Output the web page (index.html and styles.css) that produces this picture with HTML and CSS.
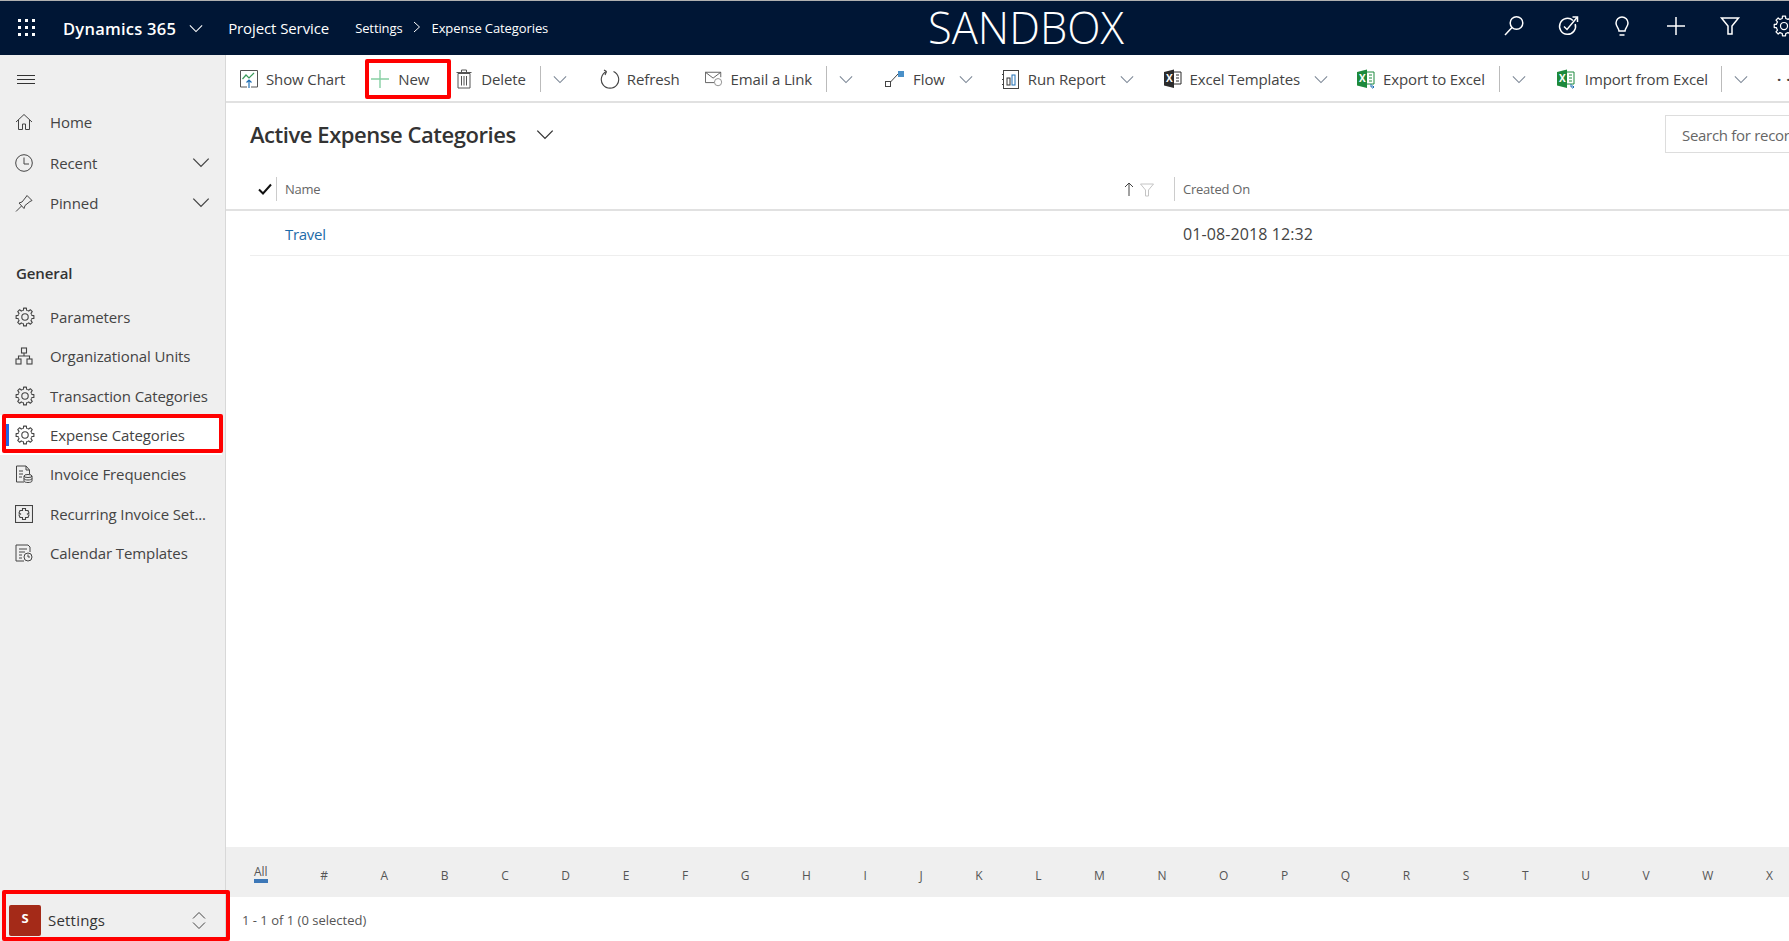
FILE: index.html
```html
<!DOCTYPE html>
<html lang="en">
  <head>
    <meta charset="UTF-8" />
    <title>Active Expense Categories</title>
    <link rel="stylesheet" href="styles.css">
  </head>
  <body>
    <svg class="defs" width="0" height="0">
      <defs>
        <symbol id="chev" viewBox="0 0 16 10"><path d="M1 1.500 8 8.500 15 1.500" fill="none" stroke="currentColor" stroke-width="1.200"/></symbol>
        <path id="tooth" d="M7.320 3.530 8.430 3.180 8.590 1.110H11.410L11.570 3.180 12.680 3.530" fill="none" stroke="currentColor" stroke-width="1.100" stroke-linejoin="round"/>
        <symbol id="gear" viewBox="0 0 20 20">
          <use href="#tooth"/>
          <use href="#tooth" transform="rotate(45 10 10)"/>
          <use href="#tooth" transform="rotate(90 10 10)"/>
          <use href="#tooth" transform="rotate(135 10 10)"/>
          <use href="#tooth" transform="rotate(180 10 10)"/>
          <use href="#tooth" transform="rotate(225 10 10)"/>
          <use href="#tooth" transform="rotate(270 10 10)"/>
          <use href="#tooth" transform="rotate(315 10 10)"/>
          <circle cx="10" cy="10" r="3.200" fill="none" stroke="currentColor" stroke-width="1.100"/>
        </symbol>
        <symbol id="xl" viewBox="0 0 18 20">
          <path d="M0 3 10 .5V19L0 16.500z" fill="currentColor"/>
          <path d="M10 3h7v12h-7" fill="none" stroke="currentColor"/>
          <path d="M12 6h3M12 9h3M12 12h3" stroke="currentColor"/>
          <text x="2" y="13" class="xl-x">X</text>
        </symbol>
      </defs>
    </svg>

    <!-- Top bar -->
    <header class="topbar">
      <svg class="waffle" width="17" height="17" viewBox="0 0 17 17" fill="#fff">
        <rect x="0" y="0" width="3" height="3"/><rect x="7" y="0" width="3" height="3"/><rect x="14" y="0" width="3" height="3"/>
        <rect x="0" y="7" width="3" height="3"/><rect x="7" y="7" width="3" height="3"/><rect x="14" y="7" width="3" height="3"/>
        <rect x="0" y="14" width="3" height="3"/><rect x="7" y="14" width="3" height="3"/><rect x="14" y="14" width="3" height="3"/>
      </svg>
      <span class="brand">Dynamics 365</span>
      <svg class="brand-chev" width="14" height="9"><use href="#chev"/></svg>
      <span class="app">Project Service</span>
      <span class="crumb">Settings</span>
      <svg class="crumb-sep" width="8" height="12" viewBox="0 0 8 12"><path d="M1 1l5.500 5L1 11" fill="none" stroke="#fff" stroke-width="1"/></svg>
      <span class="crumb">Expense Categories</span>
      <span class="sandbox">SANDBOX</span>
      <div class="top-icons">
        <svg width="22" height="22" viewBox="0 0 22 22" fill="none" stroke="#fff" stroke-width="1.500"><circle cx="13.500" cy="8" r="6.300"/><path d="M9 12.500 2 20"/></svg>
        <svg width="22" height="22" viewBox="0 0 22 22" fill="none" stroke="#fff" stroke-width="1.500"><path d="M16 5.500A8 8 0 1 0 18.200 9"/><path d="M7 11.500l3 3L20 2.500"/><path d="M15.500 2H20.500V7"/></svg>
        <svg width="22" height="22" viewBox="0 0 22 22" fill="none" stroke="#fff" stroke-width="1.500"><path d="M8 16c0-3-3-4-3-8a6 6 0 0 1 12 0c0 4-3 5-3 8z"/><path d="M8.500 20h5"/></svg>
        <svg width="22" height="22" viewBox="0 0 22 22" fill="none" stroke="#fff" stroke-width="1.500"><path d="M11 2v18M2 11h18"/></svg>
        <svg width="22" height="22" viewBox="0 0 22 22" fill="none" stroke="#fff" stroke-width="1.500"><path d="M2.500 3h17L13 11v8H9v-8z"/></svg>
        <svg width="22" height="22" class="top-gear" color="#fff"><use href="#gear"/></svg>
      </div>
    </header>

    <div class="shell">
      <!-- Left nav -->
      <nav class="sidebar">
        <svg class="burger" width="18" height="10" viewBox="0 0 18 10" stroke="#333" stroke-width="1"><path d="M0 .5h18M0 4.500h18M0 8.500h18"/></svg>
        <ul class="nav-list">
          <li class="nav-item">
            <svg width="18" height="18" viewBox="0 0 18 18" fill="none" stroke="#444" stroke-width="1"><path d="M1 9 9 1.500 17 9M3.500 7v9.500h4V11h3v5.500h4V7"/></svg>
            <span>Home</span>
          </li>
          <li class="nav-item">
            <svg width="18" height="18" viewBox="0 0 18 18" fill="none" stroke="#444" stroke-width="1"><circle cx="9" cy="9" r="8.300"/><path d="M9 3.500V10H14"/></svg>
            <span>Recent</span>
            <svg class="nav-chev" width="18" height="11" color="#444"><use href="#chev"/></svg>
          </li>
          <li class="nav-item">
            <svg width="18" height="18" viewBox="0 0 18 18" fill="none" stroke="#444" stroke-width="1"><path d="M1 17.500 6.500 12M4 9l3-1 4-5 1-1.500 5 5L15 7.500l-5 4-1 3z"/></svg>
            <span>Pinned</span>
            <svg class="nav-chev" width="18" height="11" color="#444"><use href="#chev"/></svg>
          </li>
        </ul>
        <h2 class="nav-title">General</h2>
        <ul class="nav-list sub">
          <li class="nav-item"><svg width="20" height="20" color="#444"><use href="#gear"/></svg><span>Parameters</span></li>
          <li class="nav-item">
            <svg width="18" height="18" viewBox="0 0 18 18" fill="none" stroke="#444" stroke-width="1.100"><rect x="6.500" y="1" width="5" height="5"/><rect x="1" y="12" width="5" height="5"/><rect x="12" y="12" width="5" height="5"/><path d="M9 6v3M3.500 12V9h11v3"/></svg>
            <span>Organizational Units</span>
          </li>
          <li class="nav-item"><svg width="20" height="20" color="#444"><use href="#gear"/></svg><span>Transaction Categories</span></li>
          <li class="nav-item active"><svg width="20" height="20" color="#444"><use href="#gear"/></svg><span>Expense Categories</span></li>
          <li class="nav-item">
            <svg width="18" height="18" viewBox="0 0 18 18" fill="none" stroke="#444" stroke-width="1"><path d="M9 17H1.500V1H11l3.500 4v4M11 1v4h3.500M4 6h4M4 9h4M4 12h3"/><ellipse cx="13" cy="11" rx="4" ry="1.500"/><path d="M9 11v5c0 2 8 2 8 0v-5M9 13.500c0 2 8 2 8 0"/></svg>
            <span>Invoice Frequencies</span>
          </li>
          <li class="nav-item">
            <svg width="18" height="18" viewBox="0 0 18 18" fill="none" stroke="#444" stroke-width="1.100"><rect x=".5" y=".5" width="17" height="17"/><path d="M7.500 3.500h3v2h2.500l1 2.500-1.500 1 1.500 1-1 2.500h-2.500v2h-3v-2H5l-1-2.500 1.500-1-1.500-1 1-2.500h2.500z"/></svg>
            <span>Recurring Invoice Set...</span>
          </li>
          <li class="nav-item">
            <svg width="18" height="18" viewBox="0 0 18 18" fill="none" stroke="#444" stroke-width="1"><path d="M9 17H1V1h12l2 2v5M4 5h8M4 8h6M4 11h3M4 14h3"/><circle cx="13" cy="13" r="4"/><path d="M13 10.500V13h2"/></svg>
            <span>Calendar Templates</span>
          </li>
        </ul>
        <div class="area-switch">
          <span class="area-badge">S</span>
          <span class="area-name">Settings</span>
          <svg class="area-arrows" width="14" height="17" viewBox="0 0 14 17" fill="none" stroke="#444" stroke-width="1"><path d="M1 6.500l6-6 6 6M1 10.500l6 6 6-6"/></svg>
        </div>
      </nav>

      <main class="content">
        <!-- Command bar -->
        <div class="cmdbar">
          <div class="cmd chart">
            <svg width="18" height="18" viewBox="0 0 18 18" fill="none"><path d="M7 17H.5V.5h17V17H11" stroke="#555"/><path d="M2.500 9 6 5l3 3 5-5" stroke="#3a9a5b" stroke-width="1.200"/><path d="M9 18V10M6.500 12.500 9 10l2.500 2.500" stroke="#1f6fb5" stroke-width="1.200"/></svg>
            <span>Show Chart</span>
          </div>
          <div class="cmd new">
            <svg width="18" height="18" viewBox="0 0 18 18" stroke="#86cfa3" stroke-width="1.400"><path d="M9 0v18M0 9h18"/></svg>
            <span>New</span>
          </div>
          <div class="cmd del">
            <svg width="16" height="20" viewBox="0 0 16 20" fill="none" stroke="#555"><path d="M2 4.500h12V19H2zM.5 3.500h15M5.500 3V1h5v2M5.500 7v9.500M8 7v9.500M10.500 7v9.500"/></svg>
            <span>Delete</span>
          </div>
          <i class="sep"></i>
          <svg class="cmd-chev split" width="14" height="9"><use href="#chev"/></svg>
          <div class="cmd refresh">
            <svg width="20" height="20" viewBox="0 0 20 20" fill="none" stroke="#444" stroke-width="1.100"><path d="M6.500 2.500a8.700 8.700 0 1 0 7 0"/><path d="M6.500 2.500 4 1M6.500 2.500 5 6"/></svg>
            <span>Refresh</span>
          </div>
          <div class="cmd mail">
            <svg width="18" height="18" viewBox="0 0 20 18" fill="none" stroke="#555"><path d="M10 13H.5V1.500h17V7M.5 1.500 9 8l8.500-6.500"/><circle cx="14.500" cy="12.500" r="4" stroke="#888"/></svg>
            <span>Email a Link</span>
          </div>
          <i class="sep"></i>
          <svg class="cmd-chev split" width="14" height="9"><use href="#chev"/></svg>
          <div class="cmd flow">
            <svg width="20" height="18" viewBox="0 0 20 18" fill="none"><rect x=".5" y="11.500" width="5" height="5" stroke="#444"/><path d="M5.500 12 13 4" stroke="#444"/><rect x="13" y="1" width="6" height="6" fill="#4a90c8"/></svg>
            <span>Flow</span>
          </div>
          <svg class="cmd-chev after" width="14" height="9"><use href="#chev"/></svg>
          <div class="cmd report">
            <svg width="18" height="19" viewBox="0 0 18 19" fill="none" stroke="#444"><rect x="1.500" y=".5" width="15" height="18"/><path d="M1 4v1M1 9v1M1 14v1" stroke-width="2"/><rect x="5" y="8" width="3" height="7" stroke="#333"/><rect x="10" y="5" width="3" height="10" stroke="#1f6fb5"/></svg>
            <span>Run Report</span>
          </div>
          <svg class="cmd-chev after" width="14" height="9"><use href="#chev"/></svg>
          <div class="cmd tmpl">
            <svg width="18" height="20" color="#2b2b2b"><use href="#xl"/></svg>
            <span>Excel Templates</span>
          </div>
          <svg class="cmd-chev last" width="14" height="9"><use href="#chev"/></svg>
          <div class="cmd export">
            <svg width="18" height="20" viewBox="0 0 18 20" color="#1d8a3c"><use href="#xl" width="18" height="20"/><path d="M14 15v3h3M15.500 16.500l1.500 1.500-1.500 1.500" fill="none" stroke="#1f6fb5"/></svg>
            <span>Export to Excel</span>
          </div>
          <i class="sep"></i>
          <svg class="cmd-chev split" width="14" height="9"><use href="#chev"/></svg>
          <div class="cmd import">
            <svg width="18" height="20" viewBox="0 0 18 20" color="#1d8a3c"><use href="#xl" width="18" height="20"/><path d="M14 15v3h3M15.500 16.500l1.500 1.500-1.500 1.500" fill="none" stroke="#1f6fb5"/></svg>
            <span>Import from Excel</span>
          </div>
          <i class="sep sep-last"></i>
          <svg class="cmd-chev split" width="14" height="9"><use href="#chev"/></svg>
          <span class="more">···</span>
        </div>

        <div class="view-head">
          <h1>Active Expense Categories</h1>
          <svg width="18" height="11" color="#333"><use href="#chev"/></svg>
          <div class="search">Search for records</div>
        </div>

        <!-- Grid -->
        <div class="grid-head">
          <svg class="check" width="14" height="12" viewBox="0 0 14 12" fill="none" stroke="#111" stroke-width="2"><path d="M1 6.500 5 10.500 13 1.500"/></svg>
          <div class="col col-name">
            <span>Name</span>
            <svg class="sort" width="10" height="14" viewBox="0 0 10 14" fill="none" stroke="#444"><path d="M5 14V1M1 5l4-4 4 4"/></svg>
            <svg class="col-filter" width="14" height="14" viewBox="0 0 14 14" fill="none" stroke="#c4c4c4"><path d="M.5 1h13L8.500 7v6h-3V7z"/></svg>
          </div>
          <div class="col col-date"><span>Created On</span></div>
        </div>
        <div class="grid-row">
          <a class="row-name">Travel</a>
          <span class="row-date">01-08-2018 12:32</span>
        </div>
        <div class="grid-fill"></div>

        <div class="jump"><span class="all">All</span><span>#</span><span>A</span><span>B</span><span>C</span><span>D</span><span>E</span><span>F</span><span>G</span><span>H</span><span>I</span><span>J</span><span>K</span><span>L</span><span>M</span><span>N</span><span>O</span><span>P</span><span>Q</span><span>R</span><span>S</span><span>T</span><span>U</span><span>V</span><span>W</span><span>X</span></div>
        <div class="status">1 - 1 of 1 (0 selected)</div>
      </main>
    </div>

    <!-- red annotation boxes drawn on top of the screenshot -->
    <div class="mark mark-new"></div>
    <div class="mark mark-nav"></div>
    <div class="mark mark-area"></div>
  </body>
</html>
```

FILE: styles.css
```css
html,
body {
  margin: 0;
  height: 100%;
  overflow: hidden;
}
body {
  position: relative;
  width: 1789px;
  height: 941px;
  font-family: "Open Sans", "Noto Sans", sans-serif;
  font-size: 14px;
  color: #333;
  background: #fff;
  border-top: 1px solid #b0b0b0;
  box-sizing: border-box;
}
.defs {
  position: absolute;
}
svg {
  flex: none;
  display: block;
}
ul {
  list-style: none;
  margin: 0;
  padding: 0;
}
.xl-x {
  font-family: "Open Sans", sans-serif;
  font-size: 10px;
  font-weight: 700;
  fill: #fff;
}

/* top bar */
.topbar {
  position: relative;
  height: 54px;
  background: #001635;
  color: #fff;
  display: flex;
  align-items: center;
}
.waffle {
  margin: -2px 0 0 18px;
}
.brand {
  margin-left: 28px;
  font-size: 16.500px;
  font-weight: 600;
  letter-spacing: 0.25px;
}
.brand-chev {
  margin-left: 13px;
}
.app {
  margin-left: 25px;
  font-size: 15px;
  letter-spacing: -0.1px;
}
.crumb {
  font-size: 13px;
  letter-spacing: -0.1px;
}
.app + .crumb {
  margin-left: 26px;
}
.crumb-sep {
  margin: 0 11px 2px 10px;
}
.sandbox {
  position: absolute;
  left: 928px;
  top: 0;
  line-height: 54px;
  font-size: 43.500px;
  font-weight: 300;
}
.top-icons {
  margin: -4px -6px 0 auto;
  display: flex;
  gap: 32px;
}

.shell {
  display: flex;
  height: 886px;
}

/* left nav */
.sidebar {
  position: relative;
  width: 225px;
  flex: none;
  background: #efefef;
  border-right: 1px solid #d8d8d8;
  display: flex;
  flex-direction: column;
}
.burger {
  margin: 20px 0 0 17px;
}
.nav-list {
  margin-top: 17px;
}
.nav-item {
  display: flex;
  align-items: center;
  height: 40.400px;
  padding-left: 15px;
  position: relative;
  font-size: 15px;
  letter-spacing: -0.1px;
  color: #444;
}
.nav-item span {
  position: absolute;
  left: 50px;
}
.nav-chev {
  position: absolute;
  right: 15px;
}
.nav-title {
  margin: 40px 0 0 16px;
  font-size: 15px;
  font-weight: 600;
  letter-spacing: -0.1px;
  color: #333;
}
.nav-list.sub {
  margin-top: 14px;
}
.sub .nav-item {
  height: 39.400px;
}
.nav-item.active {
  background: #fff;
  margin-right: 3px;
}
.nav-item.active::before {
  content: "";
  position: absolute;
  left: 6px;
  top: 9px;
  bottom: 9px;
  width: 3px;
  background: #2266e3;
}
.area-switch {
  margin-top: auto;
  height: 42px;
  display: flex;
  align-items: center;
  padding-left: 9px;
}
.area-badge {
  width: 32px;
  height: 31px;
  background: #a42a18;
  border-radius: 2px;
  color: #fff;
  font-weight: 700;
  font-size: 13px;
  text-align: center;
  line-height: 26px;
}
.area-name {
  margin-left: 7px;
  font-size: 15px;
  letter-spacing: 0.2px;
}
.area-arrows {
  margin-left: auto;
  margin-right: 19px;
}

/* main */
.content {
  flex: 1;
  min-width: 0;
  display: flex;
  flex-direction: column;
  overflow: hidden;
}
.cmdbar {
  height: 44px;
  padding-top: 2px;
  flex: none;
  display: flex;
  align-items: center;
  border-bottom: 2px solid #e1e1e1;
  padding-left: 14px;
  font-size: 15px;
  letter-spacing: -0.12px;
  white-space: nowrap;
  color: #444;
}
.cmd {
  display: flex;
  flex: none;
  align-items: center;
  gap: 8px;
}
.cmd-chev {
  color: #7c8796;
}
.new {
  margin-left: 26px;
  gap: 9px;
}
.del {
  margin-left: 27px;
  gap: 9px;
}
.sep {
  flex: none;
  width: 1px;
  height: 26px;
  background: #bbb;
  margin-left: 14px;
}
.sep-last {
  margin-left: 13px;
}
.cmd-chev.split {
  margin-left: 12px;
}
.cmd-chev.after {
  margin-left: 14px;
}
.cmd-chev.last {
  margin-left: 14px;
}
.refresh {
  margin-left: 33px;
  gap: 7px;
}
.mail {
  margin-left: 25px;
}
.flow {
  margin-left: 32px;
}
.report {
  margin-left: 29px;
}
.tmpl {
  margin-left: 30px;
}
.export {
  margin-left: 29px;
}
.import {
  margin-left: 31px;
  gap: 10px;
}
.more {
  flex: none;
  margin-left: 29px;
  letter-spacing: 5px;
  font-weight: 700;
}

.view-head {
  flex: none;
  height: 62px;
  padding-bottom: 2px;
  display: flex;
  align-items: center;
  position: relative;
  padding-left: 24px;
}
.view-head h1 {
  margin: 0 20px 0 0;
  font-size: 22px;
  font-weight: 600;
  letter-spacing: -0.45px;
  color: #333;
}
.search {
  position: absolute;
  left: 1439px;
  top: 12px;
  width: 200px;
  height: 36px;
  border: 1px solid #ddd;
  line-height: 38px;
  padding-left: 16px;
  color: #666;
  font-size: 15px;
  letter-spacing: -0.3px;
}

/* grid */
.grid-head {
  flex: none;
  height: 41px;
  padding-top: 1px;
  display: flex;
  align-items: center;
  border-bottom: 2px solid #e1e1e1;
  font-size: 13px;
  letter-spacing: -0.25px;
  color: #666;
}
.check {
  margin-left: 32px;
}
.col {
  height: 24px;
  border-left: 1px solid #ccc;
  display: flex;
  align-items: center;
}
.col-name {
  margin-left: 4px;
  width: 898px;
  padding-left: 8px;
  box-sizing: border-box;
}
.sort {
  margin-left: auto;
}
.col-filter {
  margin: 2px 20px 0 6px;
}
.col-date {
  padding-left: 8px;
}
.grid-row {
  flex: none;
  margin-left: 24px;
  padding-top: 2px;
  height: 42px;
  display: flex;
  align-items: center;
  border-bottom: 1px solid #eee;
  font-size: 15px;
  letter-spacing: -0.3px;
}
.row-name {
  margin-left: 35px;
  width: 898px;
  color: #1e6ba8;
}
.row-date {
  font-size: 16px;
  letter-spacing: 0.1px;
  color: #444;
}
.grid-fill {
  flex: 1;
}
.jump {
  flex: none;
  height: 50px;
  background: #efefef;
  display: flex;
  align-items: center;
  gap: 52.600px;
  padding: 6px 0 0 28px;
  font-size: 12px;
  color: #555;
  box-sizing: border-box;
}
.jump .all {
  border-bottom: 4px solid #3d78b8;
  margin-top: -2px;
  line-height: 14px;
}
.status {
  flex: none;
  height: 44px;
  line-height: 47px;
  padding-left: 16px;
  font-size: 13px;
  color: #555;
}

/* red annotation boxes */
.mark {
  position: absolute;
  border: 4px solid #f00;
  border-radius: 2px;
  box-sizing: border-box;
}
.mark-new {
  left: 365px;
  top: 58px;
  width: 86px;
  height: 40px;
}
.mark-nav {
  left: 2px;
  top: 413px;
  width: 221px;
  height: 39px;
}
.mark-area {
  left: 2px;
  top: 889px;
  width: 228px;
  height: 51px;
}
```
